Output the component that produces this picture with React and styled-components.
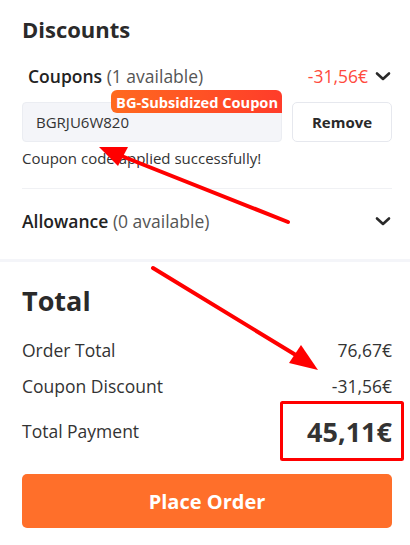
import React from 'react';
import styled, { createGlobalStyle } from 'styled-components';

const Global = createGlobalStyle`
  body {
    margin: 0;
    background: #fff;
    font-family: "Open Sans", "Noto Sans", sans-serif;
    color: #222;
  }
`;

const Page = styled.div`
  position: relative;
  width: 410px;
  height: 545px;
  overflow: hidden;
`;

const Section = styled.section`
  padding: ${p => p.$pad};
  border-bottom: ${p => (p.$band ? '3px solid #f4f5f9' : 'none')};
`;

const Heading = styled.h2`
  margin: 0;
  font-size: ${p => p.$size}px;
  font-weight: 700;
  color: #2a2a2a;
  line-height: ${p => p.$lh}px;
`;

const Row = styled.div`
  display: flex;
  align-items: center;
  justify-content: space-between;
  height: ${p => p.$h}px;
  padding-left: ${p => p.$indent || 0}px;
  font-size: 17.5px;
`;

const Label = styled.div`
  color: #333;
  b {
    font-weight: 600;
    color: #222;
  }
  span {
    color: #555;
  }
`;

const Right = styled.div`
  display: flex;
  align-items: center;
  gap: 6px;
  color: ${p => p.$color || '#333'};
`;

const Chevron = () => (
  <svg width="18" height="12" viewBox="0 0 18 12">
    <path d="M3 3.5 L9 9 L15 3.5" fill="none" stroke="#2a2a2a" strokeWidth="2.6" strokeLinecap="round" strokeLinejoin="round" />
  </svg>
);

const CodeLine = styled.div`
  display: flex;
  gap: 10px;
  margin-top: 10px;
`;

const CodeBox = styled.div`
  position: relative;
  flex: 1;
  height: 40px;
  box-sizing: border-box;
  background: #f4f5f9;
  border: 1px solid #ebedf2;
  border-radius: 4px;
  display: flex;
  align-items: center;
  padding-left: 13px;
  font-size: 15px;
  color: #333;
`;

const Badge = styled.div`
  position: absolute;
  right: -1px;
  top: -13px;
  height: 23px;
  padding: 0 4px 0 5px;
  display: flex;
  align-items: center;
  border-radius: 6px 6px 0 6px;
  background: linear-gradient(90deg, #ff6a1f, #ff3c2a);
  color: #fff;
  font-size: 14.6px;
  font-weight: 700;
  white-space: nowrap;
`;

const RemoveButton = styled.button`
  width: 100px;
  height: 40px;
  box-sizing: border-box;
  border: 1px solid #e6e8ee;
  border-radius: 5px;
  background: #fff;
  font-family: inherit;
  font-size: 15px;
  font-weight: 700;
  color: #2a2a2a;
`;

const Hint = styled.div`
  margin-top: 6px;
  font-size: 15px;
  color: #333;
  line-height: 20px;
`;

const Divider = styled.hr`
  margin: 20px 0 0;
  border: none;
  border-top: 1px solid #f0f1f4;
`;

const Amount = styled.div`
  font-size: ${p => p.$size}px;
  font-weight: ${p => p.$weight || 400};
  color: #333;
`;

const OrderButton = styled.button`
  width: 100%;
  height: 54px;
  margin-top: 16px;
  border: none;
  border-radius: 5px;
  background: #ff6f2a;
  color: #fff;
  font-family: inherit;
  font-size: 20px;
  font-weight: 700;
`;

const Marks = styled.svg`
  position: absolute;
  left: 0;
  top: 0;
  pointer-events: none;
`;

export default function App() {
  return (
    <Page>
      <Global />
      <Section $pad="11px 18px 6px 22px" $band>
        <Heading $size={22} $lh={36}>Discounts</Heading>
        <Row $h={32} $indent={6} style={{ marginTop: 13 }}>
          <Label><b>Coupons</b> <span>(1 available)</span></Label>
          <Right $color="#ff4a3d">-31,56€ <Chevron /></Right>
        </Row>
        <CodeLine>
          <CodeBox>
            BGRJU6W820
            <Badge>BG-Subsidized Coupon</Badge>
          </CodeBox>
          <RemoveButton>Remove</RemoveButton>
        </CodeLine>
        <Hint>Coupon code applied successfully!</Hint>
        <Divider />
        <Row $h={64}>
          <Label><b>Allowance</b> <span>(0 available)</span></Label>
          <Right><Chevron /></Right>
        </Row>
      </Section>
      <Section $pad="20px 18px 0 22px">
        <Heading $size={27} $lh={38}>Total</Heading>
        <Row $h={36} style={{ marginTop: 12 }}>
          <Label>Order Total</Label>
          <Amount $size={17.5}>76,67€</Amount>
        </Row>
        <Row $h={36}>
          <Label>Coupon Discount</Label>
          <Amount $size={17.5}>-31,56€</Amount>
        </Row>
        <Row $h={54}>
          <Label>Total Payment</Label>
          <Amount $size={27} $weight={700}>45,11€</Amount>
        </Row>
        <OrderButton>Place Order</OrderButton>
      </Section>

      <Marks width="410" height="545" viewBox="0 0 410 545">
        <line x1="288" y1="222" x2="114" y2="153" stroke="#ff0000" strokeWidth="4" strokeLinecap="round" />
        <polygon points="99,147 128,147 118,166" fill="#ff0000" />
        <line x1="153" y1="268" x2="304" y2="360" stroke="#ff0000" strokeWidth="4" strokeLinecap="round" />
        <polygon points="318,370 301,345 289,363" fill="#ff0000" />
        <rect x="281.5" y="402.5" width="121" height="57" fill="none" stroke="#ff0000" strokeWidth="3" rx="1" />
      </Marks>
    </Page>
  );
}
